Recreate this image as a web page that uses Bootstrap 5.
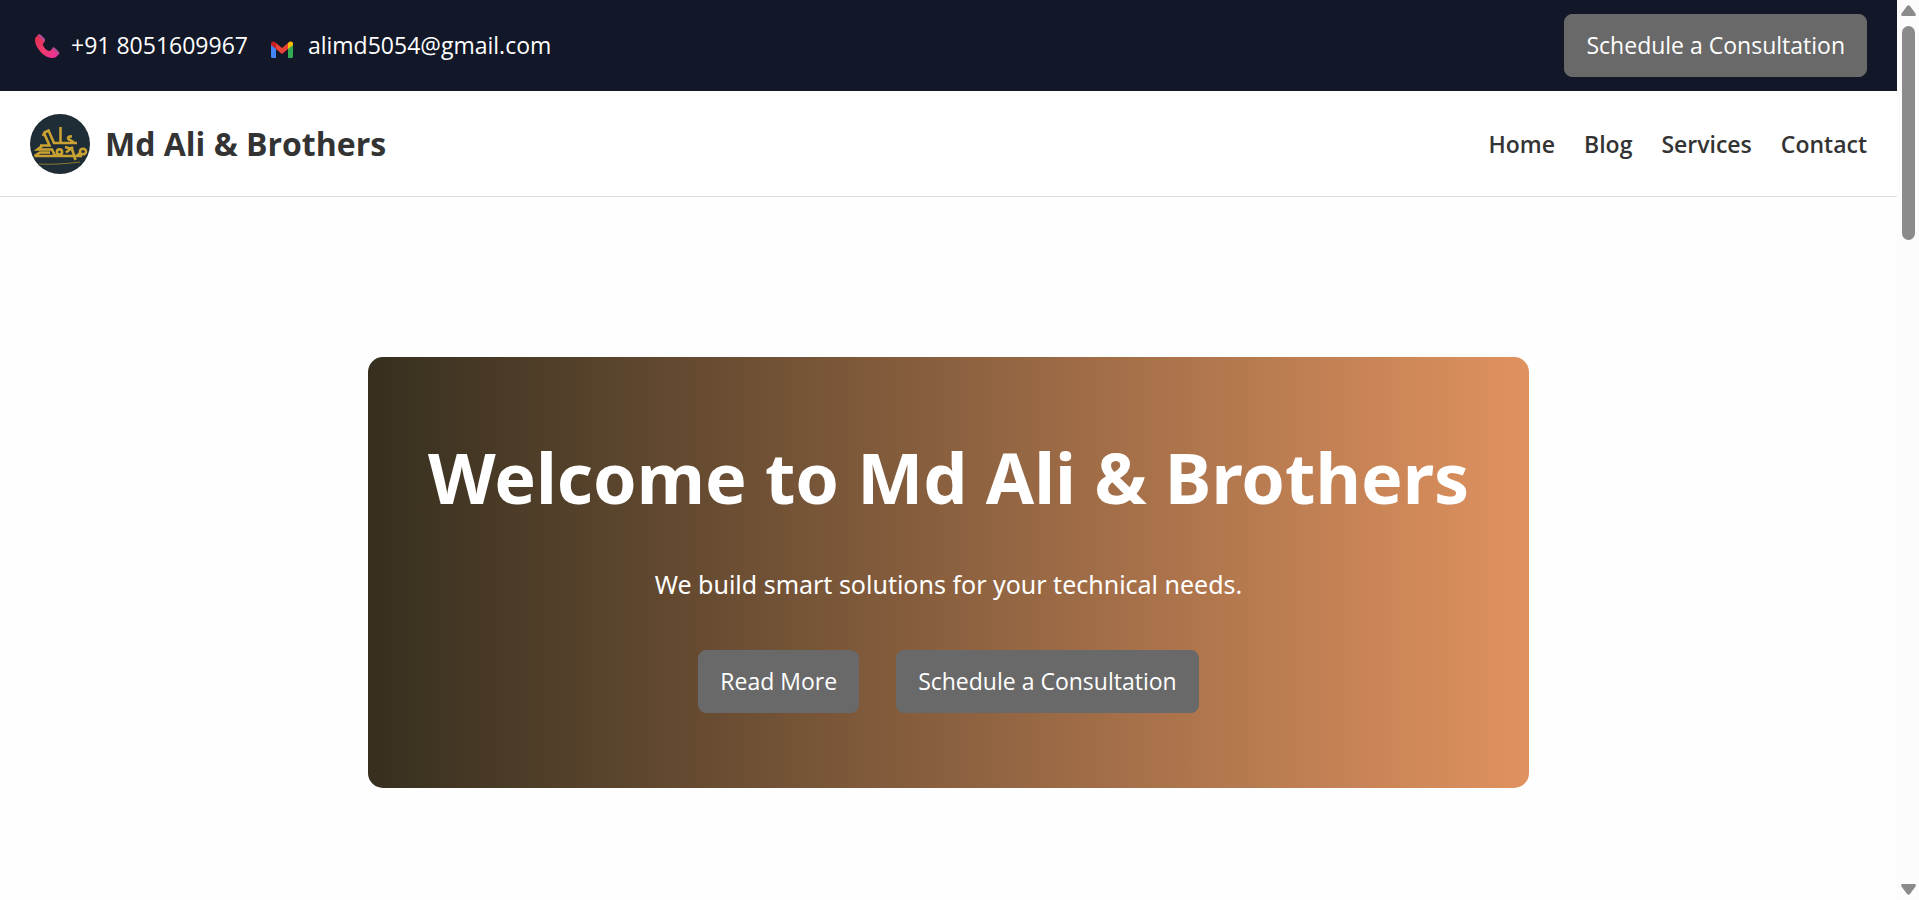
<!DOCTYPE html>
<html lang="en">
<head>
<meta charset="utf-8">
<meta name="viewport" content="width=device-width, initial-scale=1">
<title>Md Ali &amp; Brothers</title>
<link rel="stylesheet" href="https://cdn.jsdelivr.net/npm/bootstrap@5.3.0/dist/css/bootstrap.min.css">
<style>
  body { font-family: "Open Sans", "Noto Sans", sans-serif; font-size: 23px; background: #fefefe; color: #333; }
  .topbar { background: #121827; padding: 14px 30px; }
  .topbar a { color: #fff; }
  .btn-gray {
    --bs-btn-color: #fff; --bs-btn-bg: #696969; --bs-btn-border-color: #696969;
    --bs-btn-hover-color: #fff; --bs-btn-hover-bg: #585858; --bs-btn-hover-border-color: #585858;
    --bs-btn-font-size: 23px; --bs-btn-padding-x: 21px; --bs-btn-padding-y: 12px;
    --bs-btn-border-radius: 8px; --bs-btn-line-height: 37px;
  }
  .site-nav { background: #fff; padding: 23px 30px 22px; border-bottom: 1px solid #ddd; }
  .brand-name { font-size: 32px; font-weight: 700; color: #333; }
  .menu { gap: 29px; }
  .menu a { color: #333; font-weight: 600; }
  .logo-gap { gap: 15px; }
  .phone-gap { gap: 9px; }
  .contact-gap { gap: 19px; }
  .hero-area { padding: 160px 30px 80px; }
  .hero {
    font-family: "Noto Sans", "Open Sans", sans-serif;
    padding: 60px 60px 75px; border-radius: 15px; color: #fff;
    background: linear-gradient(90deg, #362f1f, #e0925f);
  }
  .hero h1 { font-size: 70px; font-weight: 700; line-height: 120px; margin-bottom: 29px; }
  .hero p { font-size: 25px; line-height: 36px; margin-bottom: 48px; }
  .hero .btn { font-family: "Open Sans", sans-serif; }
  .hero-actions { gap: 37px; }
  .rail { width: 22px; background: #fcfcfc; padding: 5px 0; }
  .rail-thumb { width: 13px; height: 24%; margin-top: 10px; background: #8b8b8b; }
</style>
<script src="https://cdn.jsdelivr.net/npm/bootstrap@5.3.0/dist/js/bootstrap.bundle.min.js"></script>
</head>
<body>
<div class="d-flex">
  <div class="flex-grow-1 min-vh-100">
    <div class="topbar d-flex flex-wrap justify-content-between align-items-center">
      <div class="d-flex flex-wrap contact-gap">
        <a class="d-flex align-items-center text-decoration-none phone-gap" href="tel:+918051609967">
          <svg width="32" height="32" viewBox="0 0 32 32" aria-hidden="true">
            <defs><linearGradient id="handset" x1="0" y1="0" x2="1" y2="1"><stop offset="0" stop-color="#e02a4c"/><stop offset=".5" stop-color="#f03a6c"/><stop offset="1" stop-color="#ee2fa6"/></linearGradient></defs>
            <path fill="url(#handset)" d="M6 7 L9 4 L15 11 C14 13 12 14 13 15 C14 18 17 21 20 21 C21 20 22 19 23 18 L29 24 L26 27 C23 29 18 28 14 25 C9 21 5 15 5 10 C5 9 5 8 6 7Z"/>
            <path fill="#b24a94" d="M8 5 C9 4 10 4 11 5 L15 9 C15 10 15 11 14 12Z M22 18 C23 17 24 17 25 18 L29 22 C30 23 29 24 28 25Z"/>
          </svg>
          <span>+91 8051609967</span>
        </a>
        <a class="d-flex align-items-center text-decoration-none phone-gap" href="mailto:alimd5054@gmail.com">
          <svg width="32" height="32" viewBox="0 0 32 32" aria-hidden="true">
            <path fill="#4285f4" d="M4 14 L9 17 V28 H5.500 Q4 28 4 26.500Z"/>
            <path fill="#34a853" d="M26 14 L21 17 V28 H24.500 Q26 28 26 26.500Z"/>
            <path fill="#ea4335" d="M9 13 L15 18 L21 13 V19 L15 24 L9 19Z"/>
            <path fill="#c5221f" d="M4 15 V13.500 C4 11.500 6.500 10.800 8 12 L9 13 V19Z"/>
            <path fill="#fbbc04" d="M26 15 V13.500 C26 11.500 23.500 10.800 22 12 L21 13 V19Z"/>
          </svg>
          <span>alimd5054@gmail.com</span>
        </a>
      </div>
      <button type="button" class="btn btn-gray">Schedule a Consultation</button>
    </div>

    <nav class="site-nav d-flex flex-wrap justify-content-between align-items-center">
      <a class="d-flex align-items-center text-decoration-none logo-gap" href="#">
        <svg width="60" height="60" viewBox="0 0 60 60" aria-hidden="true">
          <circle cx="30" cy="30" r="30" fill="#1f2d36"/>
          <g fill="none" stroke="#c9a232" stroke-width="2.600">
            <path d="M30.500 13 V29"/>
            <path d="M47 29 H24 L18.500 16.500 L14.500 18.500 L13 22"/>
            <path d="M42 22.500 C38 22 36.500 24.500 40 26 L44 28.500"/>
            <path d="M14 19 L19.500 31.500 H10"/>
            <path d="M12 32 L7.500 35.500 H22 L25 41.500"/>
            <path d="M4.500 42 H52 M4.500 42 L10 38.500 H20"/>
            <ellipse cx="29.500" cy="38" rx="2.600" ry="2.600"/>
            <path d="M35 33 L42 35 L45.500 46 M36 38.500 L43 33"/>
            <ellipse cx="53" cy="37.500" rx="3" ry="2.800"/>
            <path d="M50 39 L47 42"/>
          </g>
          <path d="M9 50 Q27 51 50 48" fill="none" stroke="#8a7a2e" stroke-width="1"/>
        </svg>
        <span class="brand-name">Md Ali &amp; Brothers</span>
      </a>
      <ul class="menu list-unstyled d-flex flex-wrap mb-0">
        <li><a class="text-decoration-none" href="#">Home</a></li>
        <li><a class="text-decoration-none" href="#">Blog</a></li>
        <li><a class="text-decoration-none" href="#">Services</a></li>
        <li><a class="text-decoration-none" href="#">Contact</a></li>
      </ul>
    </nav>

    <main class="hero-area d-flex justify-content-center">
      <section class="hero text-center">
        <h1>Welcome to Md Ali &amp; Brothers</h1>
        <p>We build smart solutions for your technical needs.</p>
        <div class="hero-actions d-flex flex-wrap justify-content-center">
          <button type="button" class="btn btn-gray">Read More</button>
          <button type="button" class="btn btn-gray">Schedule a Consultation</button>
        </div>
      </section>
    </main>
  </div>

  <div class="rail d-flex flex-column align-items-center flex-shrink-0 sticky-top vh-100" aria-hidden="true">
    <svg width="15" height="11" viewBox="0 0 15 11"><path fill="#8b8b8b" d="M6 1 Q7.500 -.5 9 1 L14.500 8.500 Q15.500 11 13.500 11 H1.500 Q-.5 11 .5 8.500Z"/></svg>
    <div class="rail-thumb rounded-pill"></div>
    <svg class="mt-auto" width="15" height="11" viewBox="0 0 15 11"><path fill="#8b8b8b" d="M6 10 Q7.500 11.500 9 10 L14.500 2.500 Q15.500 0 13.500 0 H1.500 Q-.5 0 .5 2.500Z"/></svg>
  </div>
</div>
</body>
</html>
